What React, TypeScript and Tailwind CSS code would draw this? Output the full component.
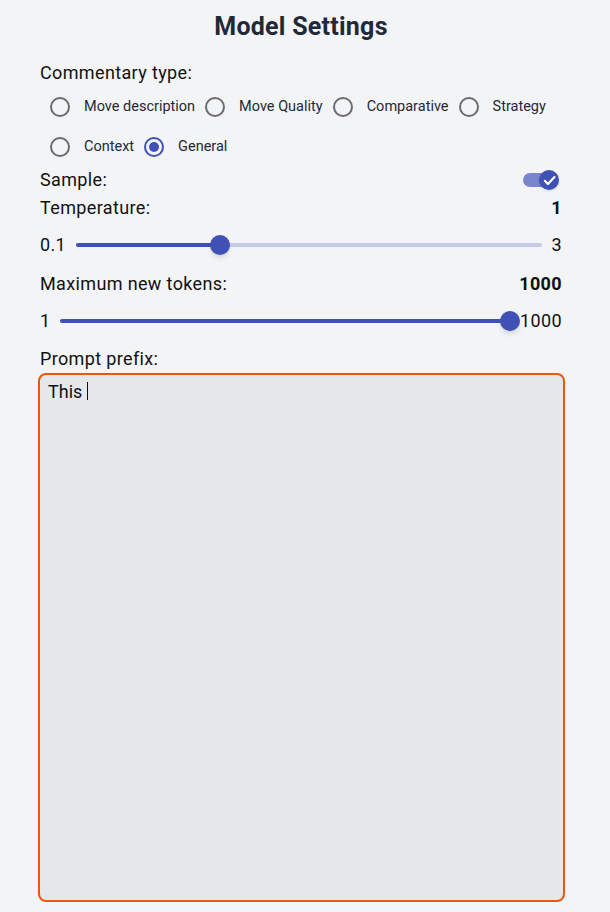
const font = { fontFamily: 'Roboto, "Liberation Sans", sans-serif' };

const options = [
  ['Move description', 'Move Quality', 'Comparative', 'Strategy'],
  ['Context', 'General'],
];

function Radio({ label, checked }: { label: string; checked?: boolean }) {
  return (
    <div className="flex items-center h-10">
      <span
        className={`w-5 h-5 rounded-full border-2 flex items-center justify-center ml-2.5 mr-3.5 ${
          checked ? 'border-[#3f51b5]' : 'border-[#6b6b6b]'
        }`}
      >
        {checked && <span className="w-2.5 h-2.5 rounded-full bg-[#3f51b5]" />}
      </span>
      <span className="text-[14.5px] text-[#1f2937]">{label}</span>
    </div>
  );
}

function Slider({ min, max, pct, gap }: { min: string; max: string; pct: number; gap: string }) {
  return (
    <div className={`flex items-center h-[46px] ${gap}`}>
      <span>{min}</span>
      <div className="relative flex-1 h-1 rounded-full bg-[#c5cae9]">
        <div className="absolute left-0 top-0 h-1 rounded-full bg-[#3f51b5]" style={{ width: `${pct}%` }} />
        <div
          className="absolute top-1/2 w-5 h-5 -mt-2.5 -ml-2.5 rounded-full bg-[#3f51b5] shadow-md"
          style={{ left: `${pct}%` }}
        />
      </div>
      <span>{max}</span>
    </div>
  );
}

export default function App() {
  return (
    <div className="min-h-[912px] bg-[#f3f4f6] pt-[11px]" style={font}>
      <h1 className="text-[25px] font-bold text-[#1f2937] text-center leading-8 pr-[8px] tracking-[0.01em]">
        Model Settings
      </h1>
      <div className="ml-10 w-[522px] mt-[16px] text-lg tracking-[0.02em] text-[#111]">
        <div className="leading-7">Commentary type:</div>
        <div className="tracking-normal">
          {options.map((row, i) => (
            <div key={i} className="flex">
              {row.map((o) => (
                <Radio key={o} label={o} checked={o === 'General'} />
              ))}
            </div>
          ))}
        </div>
        <div className="flex items-center justify-between h-7 -mt-px">
          <span>Sample:</span>
          <div className="relative w-[34px] h-3.5 mr-[5px] rounded-full bg-[#7986cb]">
            <span className="absolute -right-[2px] top-1/2 -mt-2.5 w-5 h-5 rounded-full bg-[#3f51b5] shadow flex items-center justify-center">
              <svg width="15" height="15" viewBox="0 0 24 24" fill="none" stroke="white" strokeWidth="3.5" strokeLinecap="round" strokeLinejoin="round">
                <path d="M4.5 12.5l5 5L20 6.5" />
              </svg>
            </span>
          </div>
        </div>
        <div className="flex items-center justify-between h-7">
          <span>Temperature:</span>
          <span className="font-bold">1</span>
        </div>
        <Slider min="0.1" max="3" pct={31} gap="gap-[10px]" />
        <div className="flex items-center justify-between h-7 mt-[2px]">
          <span>Maximum new tokens:</span>
          <span className="font-bold">1000</span>
        </div>
        <Slider min="1" max="1000" pct={100} gap="gap-[10px]" />
        <div className="leading-7 mt-px">Prompt prefix:</div>
        <div className="-ml-0.5 w-[527px] h-[529px] rounded-lg border-2 border-[#ea580c] bg-[#e5e7eb] px-2 pt-[3px] tracking-normal">
          <span className="text-lg leading-7">This </span>
          <span className="inline-block w-px h-[18px] bg-[#111] align-middle -mt-1" />
        </div>
      </div>
    </div>
  );
}
